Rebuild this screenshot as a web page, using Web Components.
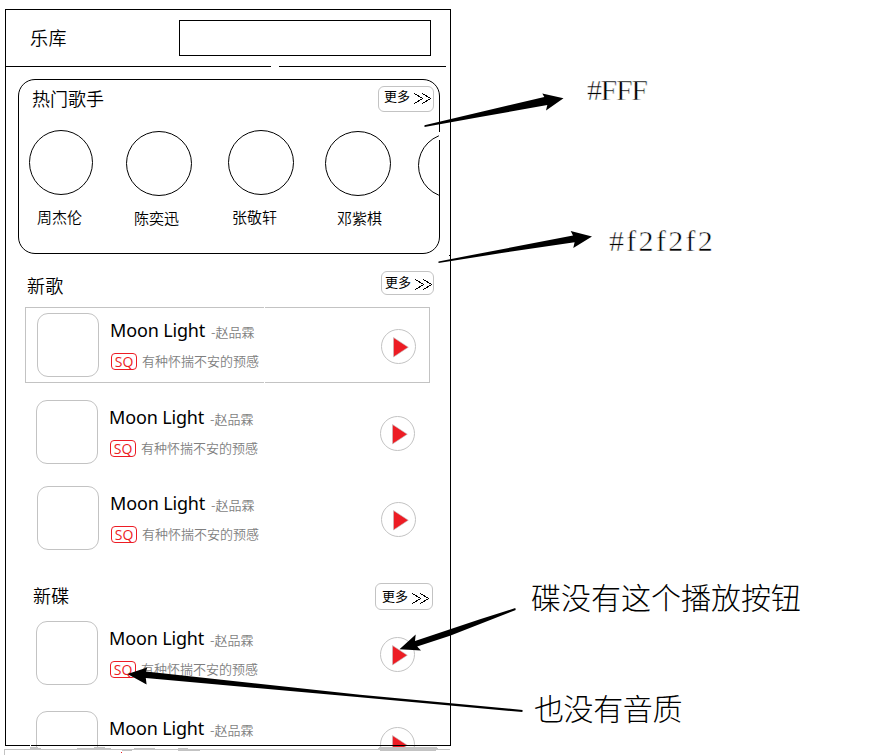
<!DOCTYPE html>
<html lang="zh">
<head>
<meta charset="utf-8">
<title>乐库</title>
<style>
html,body{margin:0;padding:0;background:#fff}
body{width:890px;height:755px;overflow:hidden;position:relative;color:#000;font-family:"Noto Sans","Noto Sans CJK SC",sans-serif}
</style>
</head>
<body>
<music-board></music-board>
<script>
const define = (name, markup, setup) => {
  const t = document.createElement('template');
  t.innerHTML = markup;
  customElements.define(name, class extends HTMLElement {
    constructor() {
      super();
      this.attachShadow({mode: 'open'}).appendChild(t.content.cloneNode(true));
    }
    connectedCallback() {
      if (setup) setup(this, this.shadowRoot);
    }
  });
};

define('section-title', `
<style>:host{display:block;font:350 18px/24px "Noto Sans CJK SC",sans-serif;white-space:nowrap}</style><slot></slot>`);

define('more-button', `
<style>
:host{display:flex;box-sizing:border-box;border:1px solid #c3c3c3;border-radius:6px;justify-content:space-between;align-items:flex-start;padding:var(--pt,1px) var(--pr,1px) 0 var(--pl,5px);font:400 13px/18px "Noto Sans CJK SC",sans-serif;white-space:nowrap}
svg{display:block;margin-top:var(--ct,5px)}
</style><span><slot></slot></span>
<svg width="18" height="12" viewBox="0 0 18 12" fill="none" stroke="#000" stroke-width="1" shape-rendering="crispEdges"><path d="M.5 .5L8.5 5.5L.5 10.5M8.5 .5L16.5 5.5L8.5 10.5"/></svg>`);

define('top-bar', `
<style>
:host{display:flex;height:57px;box-sizing:border-box;padding:10px 20px 0 24px;justify-content:space-between;
background:linear-gradient(#000,#000) 0 56px/265px 1px no-repeat,linear-gradient(#000,#000) 273px 56px/167px 1px no-repeat}
section-title{margin-top:5px;letter-spacing:.4px}
.search{width:252px;height:36px;box-sizing:border-box;border:1px solid #000}
</style><section-title><slot></slot></section-title><div class="search"></div>`);

define('singer-item', `
<style>
:host{display:flex;flex-direction:column;align-items:flex-start;flex:none;font:350 15px/20px "Noto Sans CJK SC",sans-serif;white-space:nowrap}
svg{display:block;width:var(--w,66px);height:65px}
span{margin:12px 0 0 var(--n,8px)}
</style><svg viewBox="0 0 66 65" preserveAspectRatio="none"><ellipse cx="33" cy="32.5" rx="32.5" ry="32" fill="none" stroke="#000"/></svg><span><slot></slot></span>`);

define('singer-card', `
<style>
:host{display:block;box-sizing:border-box;width:422px;height:175px;margin:12px 0 0 12px;border:1px solid #000;border-radius:17px;position:relative}
:host::after{content:"";position:absolute;left:420px;top:52px;width:1px;height:8px;background:#fff}
.head{display:flex;justify-content:space-between;padding:6px 5px 0 13px;height:44px}
more-button{width:56px;height:26px;--pt:0px;--ct:6px}
section-title{margin-top:0}
.list{display:flex;align-items:flex-start;width:411px;overflow:hidden;margin-left:10px}
</style>
<div class="head"><section-title><slot name="title"></slot></section-title><more-button>更多</more-button></div>
<div class="list"><slot></slot></div>`);

define('sound-badge', `
<style>:host{display:block;box-sizing:border-box;width:26px;height:17px;border:1px solid #ed1c24;border-radius:4px;color:#ed1c24;font:400 14px/15px "Open Sans",sans-serif;text-align:center}</style><slot></slot>`);

define('play-button', `
<style>:host,svg{display:block;width:35px;height:35px}</style>
<svg viewBox="0 0 35 35"><circle cx="17.5" cy="17.5" r="17" fill="none" stroke="#c3c3c3"/><path d="M12.5 8.5L27.3 18.2L12.5 28Z" fill="#ed1c24" stroke="#c3c3c3" stroke-width=".6"/></svg>`);

define('song-row', `
<style>
:host{display:flex;align-items:flex-start;height:64px;width:379px}
.cover{width:62px;height:64px;box-sizing:border-box;border:1px solid #c3c3c3;border-radius:11px;flex:none}
.info{flex:1;margin-left:11px;white-space:nowrap}
.line{display:flex;align-items:baseline;height:26px;margin-top:4px}
.name{font:400 18px/26px "Noto Sans",sans-serif;letter-spacing:-.15px;width:101px;flex:none}
small{font:350 13px/20px "Noto Sans CJK SC",sans-serif;color:#7f7f7f}
.sub{display:flex;gap:5px;margin:8px 0 0 1px;height:20px}
.sub sound-badge{margin-top:2px}
play-button{margin-top:16px}
</style>
<div class="cover"></div>
<div class="info"><div class="line"><span class="name">Moon Light</span><small>-赵品霖</small></div>
<div class="sub"><sound-badge>SQ</sound-badge><small>有种怀揣不安的预感</small></div></div>
<play-button></play-button>`, (host, root) => {
  if (host.hasAttribute('title-only')) root.querySelector('.sub')?.remove();
});

define('section-head', `
<style>:host{display:flex;justify-content:space-between;align-items:flex-start}section-title{margin-top:var(--tt,2px);letter-spacing:.3px}more-button{width:var(--mw);height:var(--mh);--pt:var(--mp,1px)}</style>
<section-title><slot></slot></section-title><more-button>更多</more-button>`);

define('phone-frame', `
<style>
:host{display:block;width:446px;height:740px;overflow:hidden;position:relative;margin:0 0 0 5px}
.content{padding:1px 0 0 1px}
.edge{position:absolute;inset:0 0 auto 0;height:737px;box-sizing:border-box;border:1px solid #000}
</style><div class="content"><slot></slot></div><div class="edge"></div>`);

define('note-text', `
<style>:host{display:block;position:absolute;white-space:nowrap;font:300 30px/36px "Noto Sans CJK SC",sans-serif}
:host([code]){font-family:"Liberation Serif",serif;font-weight:400;-webkit-text-stroke:.5px #fff}</style><slot></slot>`);

define('arrow-layer', `
<style>:host{display:block;position:absolute;left:0;top:0;width:890px;height:755px}svg{display:block}</style>
<svg width="890" height="755" viewBox="0 0 890 755">
<path d="M424.5 125.2L544.3 97L542.3 93.5L563.5 98.3L546 110.5L547.3 105L480 117L424.5 127Z"/>
<path d="M438.5 261.4L573 235.6L570.7 231L592 236.4L573.3 247.9L574.6 242.3L500 253.3L438.5 263Z"/>
<path d="M515.3 608.1L480 619.2L415 641L415.7 634.6L399.5 649.2L421 650.5L417.2 646.6L450 635.8L515.7 610Z"/>
<path d="M522.6 709.9L360 694.7L146 671.5L147.3 667.6L127.5 674L146.6 684.5L145.8 678L360 697.3L522.4 712Z"/>
<g shape-rendering="crispEdges">
<path fill="#c3c3c3" d="M4 749H450V750H5V755H4ZM30 747H38V748H41V750H31ZM77 748H94V747H105V748H111V750H77ZM122 750H132V751H122ZM134 748H155V750H134ZM178 748H188V749H200V751H178ZM379 747H437V748H438V750H436V751H380V750H378V748H379Z"/>
<path fill="#fff" d="M30 745H31V746H30ZM264 307H265V308H264ZM264 382H265V383H264Z"/>
<path fill="#ed1c24" d="M121 752H122V753H121Z"/><path d="M449 255H450V256H449Z"/>
</g></svg>`);

define('music-board', `
<style>
:host{display:block;padding-top:9px;height:755px;box-sizing:border-box}
.s1{margin:17px 0 0 21px;width:407px;--mw:53px;--mh:24px;--mp:1px;--pl:3px;--pr:0px;--ct:6px}
.s2{margin:33px 0 0 27px;width:400px;--mw:58px;--mh:27px;--mp:3px;--tt:0px;--pl:6px;--pr:2px;--ct:6px}
.picked{box-sizing:border-box;width:405px;height:76px;margin:10px 0 0 19px;border:1px solid #c3c3c3;padding:5px 0 0 11px}
</style>
<phone-frame>
<top-bar>乐库</top-bar>
<singer-card><span slot="title">热门歌手</span>
<singer-item style="--w:64px;--n:8px">周杰伦</singer-item>
<singer-item style="margin:1px 0 0 33px">陈奕迅</singer-item>
<singer-item style="margin:0 0 0 36px;--n:4px">张敬轩</singer-item>
<singer-item style="margin:1px 0 0 31px;--n:12px">邓紫棋</singer-item>
<singer-item style="margin:3px 0 0 27px"></singer-item>
</singer-card>
<section-head class="s1">新歌</section-head>
<div class="picked"><song-row></song-row></div>
<song-row style="margin:17px 0 0 30px"></song-row>
<song-row style="margin:22px 0 0 31px"></song-row>
<section-head class="s2">新碟</section-head>
<song-row style="margin:11px 0 0 30px"></song-row>
<song-row title-only style="margin:26px 0 0 30px"></song-row>
</phone-frame>
<note-text code style="left:587px;top:72px;letter-spacing:-1.4px">#FFF</note-text>
<note-text code style="left:609px;top:223px;letter-spacing:2.3px">#f2f2f2</note-text>
<note-text style="left:531px;top:578px">碟没有这个播放按钮</note-text>
<note-text style="left:534px;top:689px;letter-spacing:-.4px">也没有音质</note-text>
<arrow-layer></arrow-layer>`);
</script>
</body>
</html>
